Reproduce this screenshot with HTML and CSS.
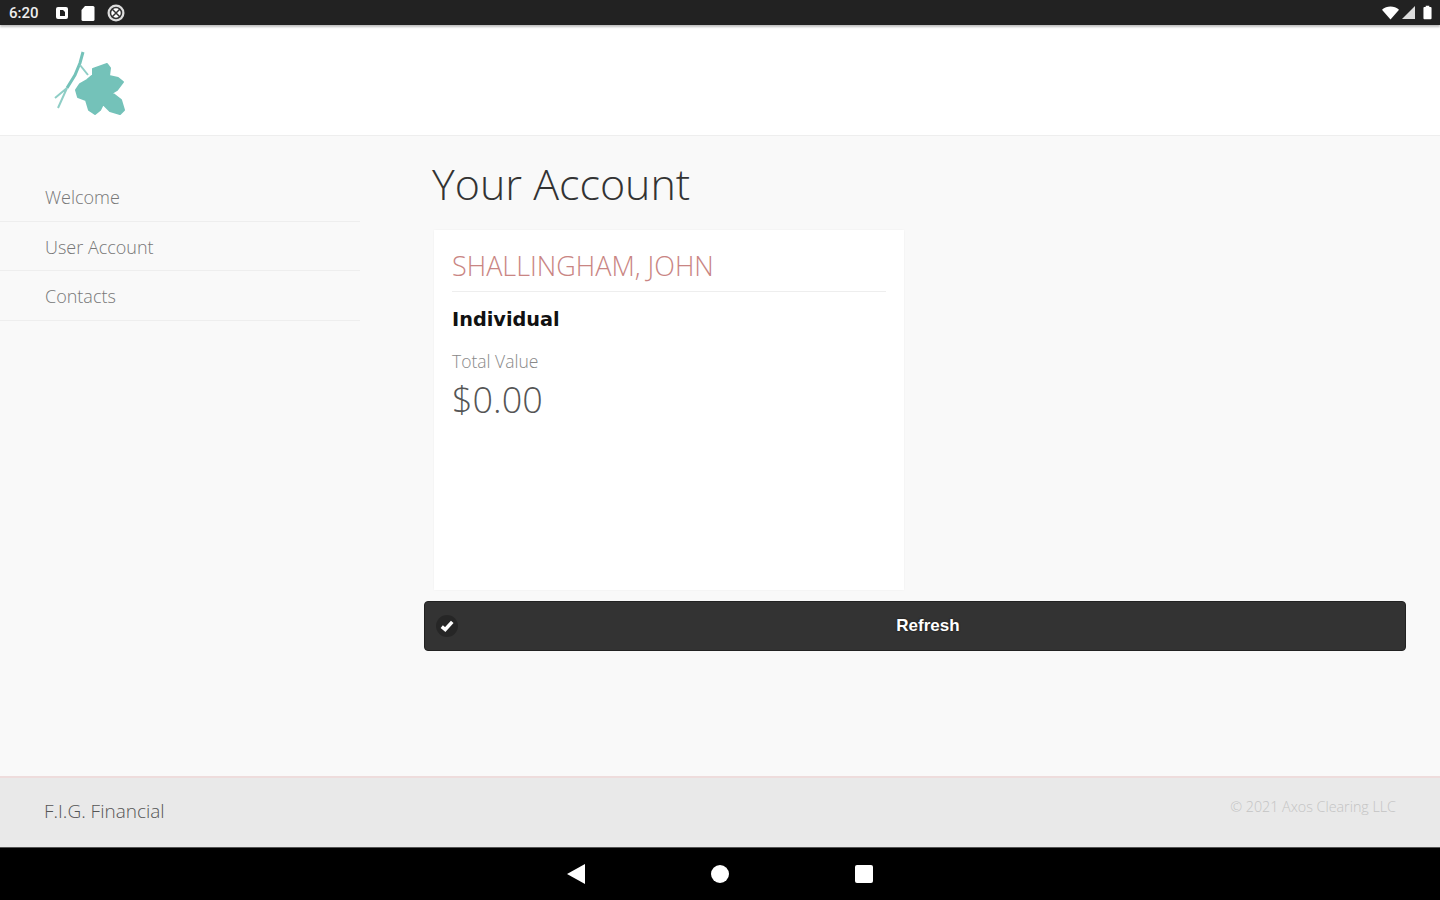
FILE: index.html
```html
<!DOCTYPE html>
<html lang="en">
<head>
    <meta charset="UTF-8">
    <meta name="viewport" content="width=device-width, initial-scale=1.0">
    <title>Your Account</title>
    <link rel="stylesheet" href="styles.css">
</head>
<body>
    <div class="status-bar">
        <div class="status-left">
            <span class="clock">6:20</span>
            <svg class="status-icon" width="14" height="14" viewBox="0 0 14 14"><rect x="1" y="1" width="12" height="12" rx="2" fill="#fff"/><path d="M5 4h3l2 2v4H5z" fill="#222"/></svg>
            <svg class="status-icon" width="14" height="16" viewBox="0 0 14 16"><path d="M4 1h8a1.500 1.500 0 0 1 1.500 1.500v12A1.500 1.500 0 0 1 12 16H2a1.500 1.500 0 0 1-1.500-1.500V5z" fill="#fff"/></svg>
            <svg class="status-icon" width="18" height="18" viewBox="0 0 18 18"><circle cx="9" cy="9" r="8.500" fill="#ddd"/><circle cx="9" cy="9" r="5.500" fill="#fff" stroke="#333" stroke-width="1.500"/><path d="M5 5l8 8M13 5l-8 8" stroke="#333" stroke-width="1.500"/></svg>
        </div>
        <div class="status-right">
            <svg class="wifi-icon" width="17" height="14" viewBox="0 0 18 14"><path d="M0 3.500C5-1 13-1 18 3.500L9 14z" fill="#fff"/></svg>
            <svg class="signal-icon" width="13" height="13" viewBox="0 0 14 14"><path d="M14 0v14H0z" fill="#ddd"/></svg>
            <svg class="battery-icon" width="9" height="15" viewBox="0 0 10 15"><path d="M3 0h4v1.500h1.500a1 1 0 0 1 1 1V14a1 1 0 0 1-1 1h-7a1 1 0 0 1-1-1V2.500a1 1 0 0 1 1-1H3z" fill="#fff"/></svg>
        </div>
    </div>

    <header class="top-bar">
        <svg class="logo" width="74" height="68" viewBox="0 0 74 68">
            <path d="M29 2L26 13L21 25L13 38" fill="none" stroke="#74c2b9" stroke-width="3"/>
            <path d="M13 38L1 48M13 38L4 58M26 15L34 25" fill="none" stroke="#8fcec6" stroke-width="2"/>
            <path d="M22 40L26 34L33 30L39 25L39 19L53 14L56 18L55 26L64 28L69 32L63 40L58 43L67 50L70 60L66 64L56 61L49 54L46 60L41 64L35 60L32 50L24 47z" fill="#74c2b9" stroke="#74c2b9" stroke-width="2" stroke-linejoin="round"/>
        </svg>
    </header>

    <div class="main">
        <nav class="side-nav">
            <a class="nav-item">Welcome</a>
            <a class="nav-item">User Account</a>
            <a class="nav-item">Contacts</a>
        </nav>
        <div class="content">
            <h1 class="page-title">Your Account</h1>
            <div class="account-card">
                <h2 class="account-name">SHALLINGHAM, JOHN</h2>
                <div class="account-type">Individual</div>
                <div class="value-label">Total Value</div>
                <div class="value-amount">$0.00</div>
            </div>
            <button class="refresh-btn">
                <span class="check-circle">
                    <svg width="14" height="12" viewBox="0 0 12 10"><path d="M1.500 5.500L4.500 8L10.500 1.500" fill="none" stroke="#fff" stroke-width="3"/></svg>
                </span>
                Refresh
            </button>
        </div>
    </div>

    <footer class="footer">
        <span class="footer-name">F.I.G. Financial</span>
        <span class="footer-copy">© 2021 Axos Clearing LLC</span>
    </footer>

    <div class="nav-bar">
        <svg width="18" height="20" viewBox="0 0 18 20"><path d="M18 0v20L0 10z" fill="#fff"/></svg>
        <svg width="18" height="18" viewBox="0 0 18 18"><circle cx="9" cy="9" r="9" fill="#fff"/></svg>
        <svg width="18" height="18" viewBox="0 0 18 18"><rect width="18" height="18" rx="2" fill="#fff"/></svg>
    </div>
</body>
</html>
```

FILE: styles.css
```css
*{
    padding: 0;
    margin: 0;
    box-sizing: border-box;
}
body{
    width: 1440px;
    height: 900px;
    overflow: hidden;
    display: flex;
    flex-direction: column;
    background-color: #f9f9f9;
    font-family: "Open Sans", "Liberation Sans", sans-serif;
}

.status-bar{
    height: 25px;
    flex-shrink: 0;
    background: #222222;
    color: #eeeeee;
    display: flex;
    justify-content: space-between;
    align-items: center;
    padding: 0 8px 0 9px;
    font-family: Roboto, sans-serif;
    box-shadow: 0 2px 2px rgba(0, 0, 0, 0.25);
    position: relative;
    z-index: 2;
}

.status-left{
    display: flex;
    align-items: center;
}

.clock{
    font-size: 15px;
    font-weight: 500;
    width: 46px;
}

.status-icon{
    margin-right: 12px;
}

.status-right{
    display: flex;
    align-items: center;
}

.signal-icon{
    margin-left: 3px;
}

.battery-icon{
    margin-left: 8px;
}

.top-bar{
    height: 111px;
    flex-shrink: 0;
    background: #ffffff;
    border-bottom: 1px solid #eeeeee;
    padding: 25px 0 0 54px;
}

.logo{
    display: block;
}

.main{
    flex: 1;
    display: flex;
}

.side-nav{
    width: 360px;
    padding-top: 36px;
    flex-shrink: 0;
}

.nav-item{
    display: block;
    height: 49.500px;
    line-height: 51px;
    padding-left: 45px;
    font-size: 18px;
    font-weight: 300;
    color: #777777;
    border-bottom: 1px solid #eeeeee;
}

.content{
    margin-left: 64px;
    width: 982px;
}

.page-title{
    font-size: 43px;
    font-weight: 300;
    color: #333333;
    line-height: 58px;
    margin: 19px 0 17px 8px;
}

.account-card{
    width: 470px;
    height: 360px;
    margin-left: 10px;
    background: #ffffff;
    padding: 0 18px;
    box-shadow: 0 0 2px rgba(0, 0, 0, 0.05);
}

.account-name{
    font-size: 27px;
    font-weight: 300;
    color: #c98583;
    line-height: 36px;
    padding: 18px 0 7px;
    height: 62px;
    border-bottom: 1px solid #eeeeee;
}

.account-type{
    font-family: "DejaVu Sans", sans-serif;
    font-size: 19.300px;
    font-weight: 700;
    color: #111111;
    margin-top: 14px;
    line-height: 28px;
}

.value-label{
    font-size: 17.500px;
    font-weight: 300;
    color: #888888;
    margin-top: 15px;
    line-height: 24px;
}

.value-amount{
    font-size: 36px;
    font-weight: 300;
    color: #555555;
    line-height: 48px;
    margin-top: 3px;
}

.refresh-btn{
    width: 982px;
    height: 50px;
    margin-top: 11px;
    display: flex;
    align-items: center;
    justify-content: center;
    position: relative;
    background: #333333;
    border: 1px solid #222222;
    border-radius: 4px;
    color: #ffffff;
    font-family: "Liberation Sans", sans-serif;
    font-size: 17px;
    font-weight: 700;
    text-shadow: 0 0 2px #111111;
    padding-left: 26px;
}

.check-circle{
    position: absolute;
    left: 11px;
    top: 13px;
    width: 22px;
    height: 22px;
    border-radius: 50%;
    background: rgba(0, 0, 0, 0.25);
    display: flex;
    align-items: center;
    justify-content: center;
}

.footer{
    height: 71px;
    flex-shrink: 0;
    background: #e9e9e9;
    border-top: 2px solid #eedcdc;
    display: flex;
    justify-content: space-between;
    padding: 0 44px;
}

.footer-name{
    font-size: 19px;
    font-weight: 300;
    color: #555555;
    line-height: 66px;
}

.footer-copy{
    font-size: 14.300px;
    font-weight: 300;
    color: #c4c4c4;
    line-height: 58px;
}

.nav-bar{
    height: 53px;
    flex-shrink: 0;
    background: #000000;
    border-top: 1px solid #555555;
    display: flex;
    justify-content: center;
    align-items: center;
    gap: 126px;
}
```
